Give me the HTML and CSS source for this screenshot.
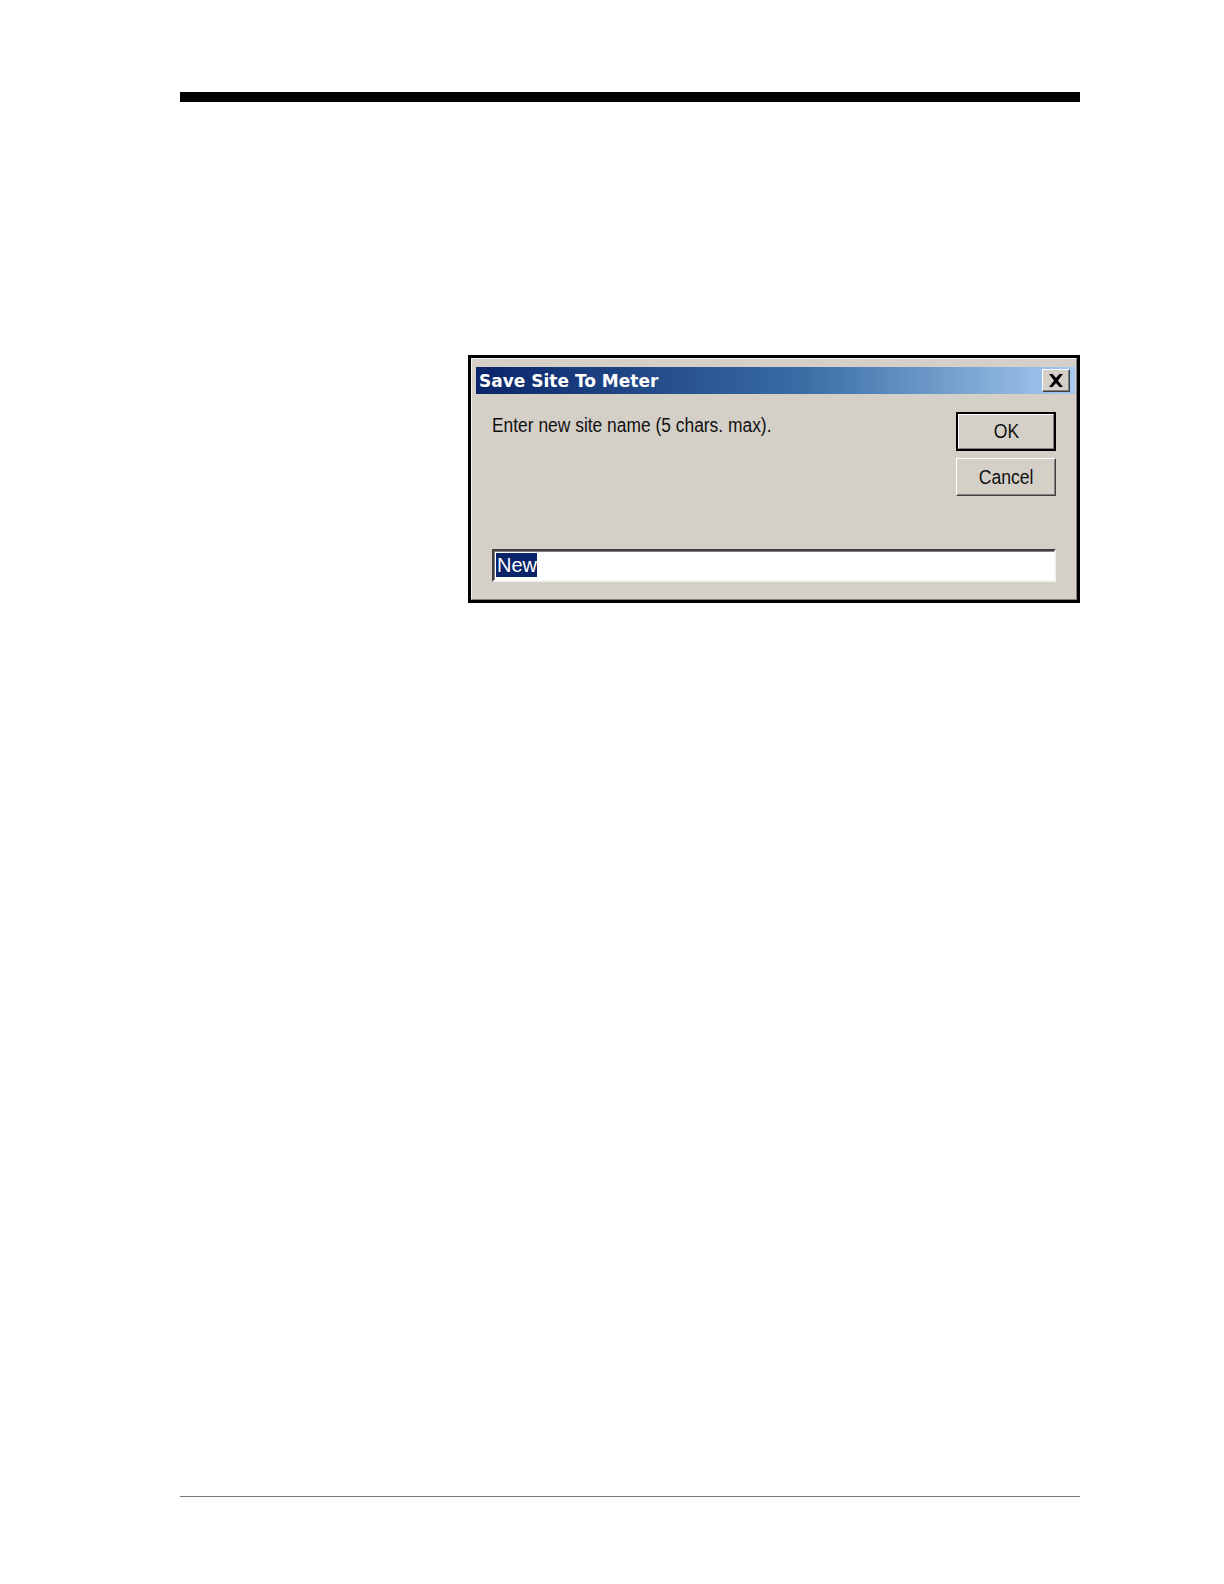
FILE: index.html
```html
<!DOCTYPE html>
<html>
<head>
<meta charset="utf-8">
<link rel="stylesheet" href="styles.css">
</head>
<body>
<div class="page">
  <div class="topbar"></div>
  <div class="dialog">
    <div class="frame">
      <div class="titlebar">
        <span class="title">Save Site To Meter</span>
        <div class="closebtn">
          <svg width="16" height="13" viewBox="0 0 16 13"><path d="M1 0 L4.6 0 L8 4.1 L11.4 0 L15 0 L9.9 6.5 L15 13 L11.4 13 L8 8.9 L4.6 13 L1 13 L6.1 6.5 Z" fill="#000"/></svg>
        </div>
      </div>
      <div class="content">
        <div class="row">
          <div class="prompt"><span class="narrow">Enter new site name (5 chars. max).</span></div>
          <div class="buttons">
            <div class="btn default"><div class="btn-inner"><span class="narrow">OK</span></div></div>
            <div class="btn"><div class="btn-inner"><span class="narrow">Cancel</span></div></div>
          </div>
        </div>
        <div class="input"><span class="sel">New</span></div>
      </div>
    </div>
  </div>
  <div class="bottomline"></div>
</div>
</body>
</html>
```
FILE: styles.css
```css
html, body {
  margin: 0;
  padding: 0;
  background: #fff;
}
.page {
  padding-top: 92px;
  font-family: "Liberation Sans", Arial, sans-serif;
}
.topbar {
  margin-left: 180px;
  width: 900px;
  height: 10px;
  background: #000;
}
.dialog {
  margin: 253px 0 0 468px;
  width: 612px;
  height: 248px;
  box-sizing: border-box;
  border: 3px solid #000;
  background: #d4d0c8;
}
.frame {
  height: 100%;
  box-sizing: border-box;
  border: 1px solid;
  border-color: #f4f3ef #808080 #808080 #f4f3ef;
  padding: 8px 1px 0 4px;
  display: flex;
  flex-direction: column;
}
.titlebar {
  height: 27px;
  flex: none;
  background: linear-gradient(to right, #0a246a 0%, #3a6ea5 55%, #a6caf0 100%);
  display: flex;
  align-items: center;
  justify-content: space-between;
  padding: 0 5px 0 3px;
}
.title {
  color: #fff;
  font-family: "DejaVu Sans", Verdana, sans-serif;
  font-weight: bold;
  font-size: 17px;
  letter-spacing: 0;
}
.closebtn {
  width: 28px;
  height: 23px;
  box-sizing: border-box;
  background: #d4d0c8;
  border: 1px solid;
  border-color: #fff #404040 #404040 #fff;
  box-shadow: inset -1px -1px 0 #808080;
  display: flex;
  align-items: center;
  justify-content: center;
}
.content {
  flex: 1;
  padding: 18px 19px 0 16px;
  display: flex;
  flex-direction: column;
}
.row {
  display: flex;
  justify-content: space-between;
  height: 84px;
}
.narrow {
  display: inline-block;
  transform: scaleX(0.87);
  transform-origin: left center;
  white-space: nowrap;
}
.prompt {
  font-size: 20px;
  color: #111;
  line-height: 24px;
  padding-top: 1px;
}
.buttons {
  display: flex;
  flex-direction: column;
  gap: 7px;
  width: 100px;
}
.btn {
  height: 38px;
  box-sizing: border-box;
  border: 1px solid;
  border-color: #fff #404040 #404040 #fff;
  background: #d4d0c8;
}
.btn .btn-inner {
  height: 100%;
  box-sizing: border-box;
  border: 1px solid;
  border-color: #d4d0c8 #808080 #808080 #d4d0c8;
  display: flex;
  align-items: center;
  justify-content: center;
  font-size: 20px;
  color: #111;
}
.btn .narrow {
  transform: scaleX(0.88);
  transform-origin: center center;
}
.btn.default {
  height: 39px;
  border: 2px solid #000;
}
.btn.default .btn-inner {
  border-color: #fff #808080 #808080 #fff;
}
.input {
  margin-top: 53px;
  height: 33px;
  box-sizing: border-box;
  border: 2px solid;
  border-color: #404040 #f4f3ef #f4f3ef #404040;
  box-shadow: inset 1px 1px 0 #808080;
  background: #fff;
  padding: 2px 0 0 2px;
  display: flex;
  align-items: flex-start;
}
.sel {
  background: #0a246a;
  color: #fff;
  font-size: 20px;
  line-height: 24px;
  height: 24px;
  padding: 0 0 0 1px;
}
.bottomline {
  margin: 893px 0 0 180px;
  width: 900px;
  height: 1px;
  background: #777;
}
```
